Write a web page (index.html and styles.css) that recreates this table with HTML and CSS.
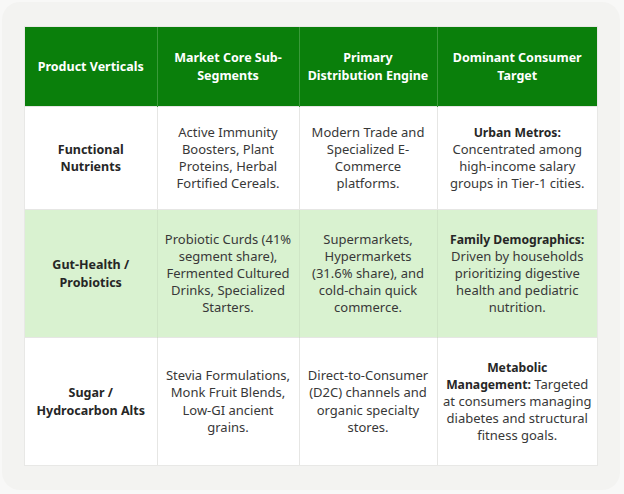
FILE: index.html
```html
<!DOCTYPE html>
<html>
<head>
<meta charset="utf-8">
<link rel="stylesheet" href="styles.css">
</head>
<body>
<div class="panel">
  <table class="grid">
    <colgroup>
      <col class="c1"><col class="c2"><col class="c3"><col class="c4">
    </colgroup>
    <thead>
      <tr class="head">
        <th>Product Verticals</th>
        <th>Market Core Sub-<br>Segments</th>
        <th>Primary<br>Distribution Engine</th>
        <th>Dominant Consumer<br>Target</th>
      </tr>
    </thead>
    <tbody>
      <tr class="r1">
        <td class="name">Functional<br>Nutrients</td>
        <td>Active Immunity<br>Boosters, Plant<br>Proteins, Herbal<br>Fortified Cereals.</td>
        <td>Modern Trade and<br>Specialized E-<br>Commerce<br>platforms.</td>
        <td><b>Urban Metros:</b><br>Concentrated among<br>high-income salary<br>groups in Tier-1 cities.</td>
      </tr>
      <tr class="r2 alt">
        <td class="name">Gut-Health /<br>Probiotics</td>
        <td>Probiotic Curds (41%<br>segment share),<br>Fermented Cultured<br>Drinks, Specialized<br>Starters.</td>
        <td>Supermarkets,<br>Hypermarkets<br>(31.6% share), and<br>cold-chain quick<br>commerce.</td>
        <td><b>Family Demographics:</b><br>Driven by households<br>prioritizing digestive<br>health and pediatric<br>nutrition.</td>
      </tr>
      <tr class="r3">
        <td class="name">Sugar /<br>Hydrocarbon Alts</td>
        <td>Stevia Formulations,<br>Monk Fruit Blends,<br>Low-GI ancient<br>grains.</td>
        <td>Direct-to-Consumer<br>(D2C) channels and<br>organic specialty<br>stores.</td>
        <td><b>Metabolic<br>Management:</b> Targeted<br>at consumers managing<br>diabetes and structural<br>fitness goals.</td>
      </tr>
    </tbody>
  </table>
</div>
</body>
</html>
```

FILE: styles.css
```css
html, body {
  margin: 0;
  padding: 0;
  background: #f8f8f7;
}
body {
  width: 624px;
  height: 494px;
  overflow: hidden;
  font-family: "Noto Sans", "Open Sans", sans-serif;
}
.panel {
  box-sizing: border-box;
  width: 618px;
  height: 488px;
  margin: 2px 0 0 2px;
  padding: 25px 0 0 23px;
  background: #f3f3f1;
  border-radius: 18px;
}
.grid {
  border-collapse: collapse;
  table-layout: fixed;
  width: 572px;
  background: #ffffff;
  box-shadow: 0 0 0 1px #e8e8e6;
}
.c1 { width: 132px; }
.c2 { width: 142px; }
.c3 { width: 138px; }
.c4 { width: 160px; }
.grid th,
.grid td {
  padding: 0 3px;
  text-align: center;
  vertical-align: middle;
  line-height: 17.1px;
  border-left: 1px solid #e6e6e4;
}
.grid th {
  font-size: 12.5px;
}
.grid td {
  font-size: 13px;
  color: #383838;
  border-top: 1px solid #e6e6e4;
}
.grid th:first-child,
.grid td:first-child {
  border-left: none;
}
.head th {
  height: 79px;
  background: #0a7f0b;
  color: #ffffff;
  font-weight: 700;
  border-left-color: #3a9a3a;
}
.grid td b {
  font-size: 12.2px;
  color: #262626;
  font-weight: 700;
}
.grid td.name {
  font-size: 12.5px;
  color: #262626;
  font-weight: 700;
}
.r1 td { height: 102px; }
.r2 td { height: 127px; }
.r3 td { height: 127px; }
.alt td {
  background: #d9f2d0;
  border-left-color: #cfe6c6;
}
.alt td:first-child { border-left: none; }
```
